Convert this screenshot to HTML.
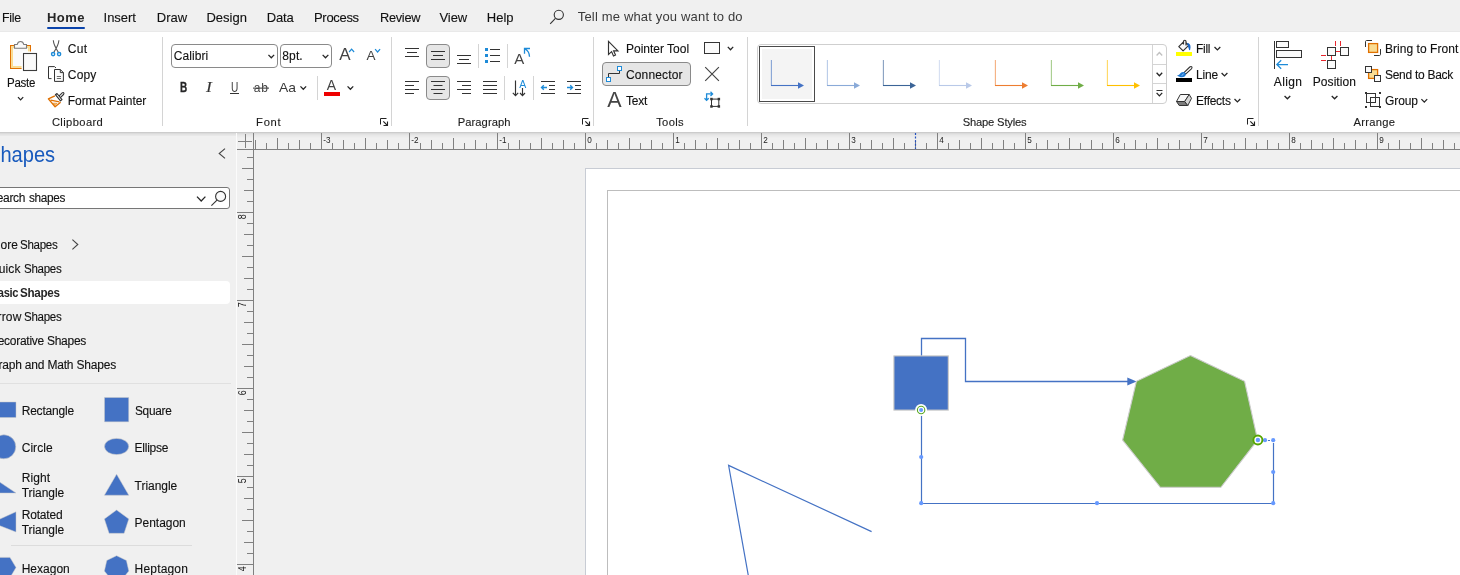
<!DOCTYPE html>
<html lang="en"><head><meta charset="utf-8"><title>Visio</title>
<style>
html,body{margin:0;padding:0;background:#f0f0f0;}
body{width:1460px;height:575px;overflow:hidden;position:relative;font-family:"Liberation Sans",sans-serif;color:#111111;}
#app{position:absolute;left:0;top:0;width:1460px;height:575px;overflow:hidden;background:#f0f0f0;}
.t{position:absolute;-webkit-text-stroke:0.12px currentColor;white-space:nowrap;line-height:16px;height:16px;}
#txt{position:absolute;left:0;top:0;width:1460px;height:575px;will-change:transform;}
.b{position:absolute;box-sizing:border-box;}
svg.ov{position:absolute;left:0;top:0;will-change:transform;}
</style></head>
<body><div id="app">
<div class="b tabbar" style="left:0px;top:0px;width:1460px;height:32px;background:#f0f0f0;"></div>
<div class="b ribbon" style="left:0px;top:32px;width:1460px;height:100px;background:#fff;"></div>
<div class="b shadow" style="left:0px;top:132px;width:1460px;height:6px;background:linear-gradient(#ccc 0,#ccc 1px,#dbdbdb 1px,#dbdbdb 2px,#e3e3e3 2px,#e3e3e3 3px,#e8e8e8 3px,#e8e8e8 4px,#ebebeb 4px,#ebebeb 5px,#eee 5px,#eee 6px);"></div>
<div class="b tabsel" style="left:47px;top:27px;width:38px;height:2px;background:#0a43ab;border-radius:1px;"></div>
<div class="b" style="left:0px;top:31px;width:1460px;height:1px;background:#e9e9e9;"></div>
<div class="b" style="left:162px;top:37px;width:1px;height:89px;background:#d4d4d4;"></div>
<div class="b" style="left:391px;top:37px;width:1px;height:89px;background:#d4d4d4;"></div>
<div class="b" style="left:593px;top:37px;width:1px;height:89px;background:#d4d4d4;"></div>
<div class="b" style="left:747px;top:37px;width:1px;height:89px;background:#d4d4d4;"></div>
<div class="b" style="left:1258px;top:37px;width:1px;height:89px;background:#d4d4d4;"></div>
<div class="b" style="left:171px;top:44px;width:107px;height:24px;border:1px solid #8a8a8a;border-radius:4px;background:#fff;"></div>
<div class="b" style="left:280px;top:44px;width:52px;height:24px;border:1px solid #8a8a8a;border-radius:4px;background:#fff;"></div>
<div class="b" style="left:317px;top:76px;width:1px;height:24px;background:#d4d4d4;"></div>
<div class="b" style="left:426px;top:44px;width:24px;height:24px;background:#e6e6e6;border:1px solid #8a8a8a;border-radius:4px;"></div>
<div class="b" style="left:426px;top:76px;width:24px;height:24px;background:#e6e6e6;border:1px solid #8a8a8a;border-radius:4px;"></div>
<div class="b" style="left:478px;top:44px;width:1px;height:24px;background:#d4d4d4;"></div>
<div class="b" style="left:507px;top:44px;width:1px;height:24px;background:#d4d4d4;"></div>
<div class="b" style="left:504px;top:76px;width:1px;height:24px;background:#d4d4d4;"></div>
<div class="b" style="left:533px;top:76px;width:1px;height:24px;background:#d4d4d4;"></div>
<div class="b" style="left:602px;top:62px;width:89px;height:24px;background:#e6e6e6;border:1px solid #8a8a8a;border-radius:4px;"></div>
<div class="b gallery" style="left:757px;top:44px;width:410px;height:60px;border:1px solid #cfcfcf;border-radius:4px;background:#fff;"></div>
<div class="b gsel" style="left:759px;top:46px;width:56px;height:56px;border:1px solid #4a4a4a;background:#fff;"></div>
<div class="b" style="left:762px;top:49px;width:50px;height:50px;background:#f4f4f4;"></div>
<div class="b" style="left:1152px;top:45px;width:1px;height:58px;background:#d4d4d4;"></div>
<div class="b" style="left:1153px;top:64px;width:13px;height:1px;background:#d4d4d4;"></div>
<div class="b" style="left:1153px;top:83px;width:13px;height:1px;background:#d4d4d4;"></div>
<div class="b panel" style="left:0px;top:136px;width:236px;height:439px;background:#f0f0f0;"></div>
<div class="b" style="left:236px;top:133px;width:1px;height:442px;background:#fbfbfb;"></div>
<div class="b search" style="left:-12px;top:187px;width:242px;height:22px;border:1px solid #767676;border-radius:3px;background:#fff;"></div>
<div class="b sel" style="left:-12px;top:281px;width:242px;height:23px;background:#fff;border-radius:4px;"></div>
<div class="b" style="left:0px;top:383px;width:231px;height:1px;background:#e0e0e0;"></div>
<div class="b" style="left:11px;top:545px;width:181px;height:1px;background:#dcdcdc;"></div>
<div class="b page" style="left:585px;top:168px;width:875px;height:407px;background:#fff;border-left:1px solid #c8ccd4;border-top:1px solid #c8ccd4;box-sizing:border-box;"></div>
<div class="b margin" style="left:607px;top:190px;width:853px;height:385px;border-left:1px solid #bdbdbd;border-top:1px solid #bdbdbd;box-sizing:border-box;"></div>
<svg class="ov" width="1460" height="575" viewBox="0 0 1460 575">
<circle cx="558.8" cy="14.8" r="4.6" fill="none" stroke="#333333" stroke-width="1.1"/>
<path d="M555.4 18.3L550.2 23.8" stroke="#333333" stroke-width="1.1" fill="none"/>
<rect x="10.6" y="45.6" width="19.8" height="22.8" fill="#fafafa" stroke="#e07000" stroke-width="1.2"/>
<rect x="12.1" y="47.1" width="16.8" height="19.8" fill="none" stroke="#fbdc8e" stroke-width="1.8"/>
<path d="M14.5 48.2V44.5H17.2C17.6 42.6 18.9 41.5 20.5 41.5C22.1 41.5 23.4 42.6 23.8 44.5H26.5V48.2Z" fill="#fafafa" stroke="#7a7a7a" stroke-width="1.1"/>
<rect x="21.6" y="51.5" width="17" height="20.5" fill="#fff"/>
<rect x="23.5" y="53.5" width="13" height="17" fill="#fafafa" stroke="#3c3c3c" stroke-width="1.1"/>
<path d="M18.00 97.15L20.60 99.85L23.20 97.15" fill="none" stroke="#262626" stroke-width="1.3"/>
<path d="M53.3 40.3C53.5 44 54.9 47 58.5 52.5M58.9 40.3C58.7 44 57.3 47 53.7 52.5" fill="none" stroke="#555" stroke-width="1.1"/>
<circle cx="53.1" cy="54.1" r="1.6" fill="#fff" stroke="#1e8bd8" stroke-width="1.4"/>
<circle cx="59.1" cy="54.1" r="1.6" fill="#fff" stroke="#1e8bd8" stroke-width="1.4"/>
<path d="M54.5 66.6H48.5V78.6H51.5" fill="none" stroke="#333333" stroke-width="1"/>
<path d="M54.5 66.6L56 68" fill="none" stroke="#333333" stroke-width="1"/>
<path d="M54.5 69.5H60.3L63.4 72.6V81.4H54.5Z" fill="#fafafa" stroke="#333333" stroke-width="1"/>
<path d="M60.3 69.5V72.6H63.4" fill="none" stroke="#333333" stroke-width="1"/>
<path d="M56.8 76.5H61M56.8 78.5H61" fill="none" stroke="#6a6a6a" stroke-width="1"/>
<path d="M54.9 95.8L48.4 98.9L55.1 106.7L60.6 102.2" fill="#fff" stroke="#e07000" stroke-width="1.4" stroke-linejoin="round"/>
<path d="M50.6 100.1L59.4 101.9" fill="none" stroke="#e07000" stroke-width="1.3"/>
<path d="M53.3 103.1L57 103.3L55.1 105.4Z" fill="#fbd98a" stroke="#e07000" stroke-width="0.6"/>
<path d="M58.4 96.6L62.2 92.8C62.8 92.3 63.5 92.4 63.8 93C64.1 93.6 63.9 94.1 63.5 94.5L59.9 98.2" fill="#fff" stroke="#333333" stroke-width="1.1" stroke-linejoin="round"/>
<path d="M55.4 94.7L57 93.5L62 99.6L60.5 100.9Z" fill="#fff" stroke="#333333" stroke-width="1.15" stroke-linejoin="round"/>
<path d="M268.45 54.88L271.30 57.72L274.15 54.88" fill="none" stroke="#262626" stroke-width="1.3"/>
<path d="M322.65 54.88L325.50 57.72L328.35 54.88" fill="none" stroke="#262626" stroke-width="1.3"/>
<path d="M349.10 52.00L351.60 49.20L354.10 52.00" fill="none" stroke="#1e8bd8" stroke-width="1.2"/>
<path d="M375.10 49.20L377.60 52.00L380.10 49.20" fill="none" stroke="#1e8bd8" stroke-width="1.2"/>
<rect x="230" y="93" width="9" height="1" fill="#333333"/>
<rect x="253" y="87.6" width="16" height="1" fill="#333333"/>
<path d="M300.45 86.38L303.30 89.22L306.15 86.38" fill="none" stroke="#262626" stroke-width="1.3"/>
<rect x="324" y="92" width="16" height="4" fill="#ee0000"/>
<path d="M347.55 86.38L350.40 89.22L353.25 86.38" fill="none" stroke="#262626" stroke-width="1.3"/>
<path d="M380.5 124.5V118.5H386.5" fill="none" stroke="#222" stroke-width="1"/>
<path d="M383.3 121.3L387.5 125.5M387.5 121.5V125.5H383.5" fill="none" stroke="#222" stroke-width="1.1"/>
<rect x="405" y="48" width="14" height="1" fill="#333333"/>
<rect x="407.0" y="52" width="10.0" height="1" fill="#333333"/>
<rect x="405" y="56" width="14" height="1" fill="#333333"/>
<rect x="431" y="51" width="14" height="1" fill="#333333"/>
<rect x="433.0" y="55" width="10.0" height="1" fill="#333333"/>
<rect x="431" y="59" width="14" height="1" fill="#333333"/>
<rect x="457" y="55" width="14" height="1" fill="#333333"/>
<rect x="459.0" y="59" width="10.0" height="1" fill="#333333"/>
<rect x="457" y="63" width="14" height="1" fill="#333333"/>
<rect x="485" y="48" width="3" height="3" fill="#1e8bd8"/>
<rect x="490" y="49" width="10" height="1" fill="#333333"/>
<rect x="485" y="54" width="3" height="3" fill="#1e8bd8"/>
<rect x="490" y="55" width="10" height="1" fill="#333333"/>
<rect x="485" y="60" width="3" height="3" fill="#1e8bd8"/>
<rect x="490" y="61" width="10" height="1" fill="#333333"/>
<path d="M529.5 56.7C529.5 53 527.8 50.4 524.8 48.7M524.5 53.8V48.5H530" fill="none" stroke="#1e8bd8" stroke-width="1.3"/>
<rect x="405" y="81" width="14" height="1" fill="#333333"/>
<rect x="405" y="85" width="9" height="1" fill="#333333"/>
<rect x="405" y="89" width="14" height="1" fill="#333333"/>
<rect x="405" y="93" width="9" height="1" fill="#333333"/>
<rect x="431" y="81" width="14" height="1" fill="#333333"/>
<rect x="433.5" y="85" width="9.0" height="1" fill="#333333"/>
<rect x="431" y="89" width="14" height="1" fill="#333333"/>
<rect x="433.5" y="93" width="9.0" height="1" fill="#333333"/>
<rect x="457" y="81" width="14" height="1" fill="#333333"/>
<rect x="462" y="85" width="9" height="1" fill="#333333"/>
<rect x="457" y="89" width="14" height="1" fill="#333333"/>
<rect x="462" y="93" width="9" height="1" fill="#333333"/>
<rect x="483" y="81" width="14" height="1" fill="#333333"/>
<rect x="483" y="85" width="14" height="1" fill="#333333"/>
<rect x="483" y="89" width="14" height="1" fill="#333333"/>
<rect x="483" y="93" width="14" height="1" fill="#333333"/>
<path d="M515.5 80.5V95.5M512.8 92.8L515.5 95.6L518.2 92.8" fill="none" stroke="#333333" stroke-width="1.15"/>
<path d="M522.5 88V95.5M520 93L522.5 95.6L525 93" fill="none" stroke="#333333" stroke-width="1.15"/>
<rect x="541" y="81" width="14" height="1" fill="#333333"/>
<rect x="549" y="85" width="6" height="1" fill="#333333"/>
<rect x="549" y="89" width="6" height="1" fill="#333333"/>
<rect x="541" y="93" width="14" height="1" fill="#333333"/>
<path d="M541.5 87.5H547M543.8 85.2L541.5 87.5L543.8 89.8" fill="none" stroke="#1e8bd8" stroke-width="1.35"/>
<rect x="567" y="81" width="14" height="1" fill="#333333"/>
<rect x="575" y="85" width="6" height="1" fill="#333333"/>
<rect x="575" y="89" width="6" height="1" fill="#333333"/>
<rect x="567" y="93" width="14" height="1" fill="#333333"/>
<path d="M567 87.5H572.5M570.2 85.2L572.5 87.5L570.2 89.8" fill="none" stroke="#1e8bd8" stroke-width="1.35"/>
<path d="M582.5 124.5V118.5H588.5" fill="none" stroke="#222" stroke-width="1"/>
<path d="M585.3 121.3L589.5 125.5M589.5 121.5V125.5H585.5" fill="none" stroke="#222" stroke-width="1.1"/>
<path d="M608.5 41.4V54.4L611.6 51.6L613.5 55.9L615.5 55L613.6 50.8H617.9Z" fill="#fff" stroke="#333333" stroke-width="1.15" stroke-linejoin="miter"/>
<rect x="704.5" y="42.5" width="15" height="11" fill="#fafafa" stroke="#333333" stroke-width="1"/>
<path d="M727.80 46.90L730.50 49.70L733.20 46.90" fill="none" stroke="#262626" stroke-width="1.3"/>
<path d="M608.5 78V73.5H619.5V69" fill="none" stroke="#333333" stroke-width="1"/>
<rect x="606.5" y="77.5" width="4" height="4" fill="#fff" stroke="#1e8bd8" stroke-width="1"/>
<rect x="617.5" y="66.5" width="4" height="4" fill="#fff" stroke="#1e8bd8" stroke-width="1"/>
<path d="M705.2 67.1L718.9 80.8M718.9 67.1L705.2 80.8" fill="none" stroke="#444" stroke-width="1.15"/>
<rect x="711.5" y="99.1" width="7.3" height="7.3" fill="none" stroke="#333333" stroke-width="1"/>
<rect x="710.2" y="97.8" width="2.5" height="2.5" fill="#333333"/>
<rect x="717.6" y="97.8" width="2.5" height="2.5" fill="#333333"/>
<rect x="710.2" y="105.2" width="2.5" height="2.5" fill="#333333"/>
<rect x="717.6" y="105.2" width="2.5" height="2.5" fill="#333333"/>
<path d="M706.6 100.2V93.9H712.4M710.5 91.8L712.6 93.9L710.5 96M704.5 98.2L706.6 100.4L708.7 98.2" fill="none" stroke="#1e8bd8" stroke-width="1.3"/>
<path d="M771.4 60V85.5" fill="none" stroke="#4472c4" stroke-width="1.1" stroke-opacity="0.62"/>
<path d="M771 85.5H798.5" fill="none" stroke="#4472c4" stroke-width="1.1"/>
<path d="M798 82.3L804 85.5L798 88.7Z" fill="#4472c4"/>
<path d="M827.4 60V85.5" fill="none" stroke="#8aaad8" stroke-width="1.1" stroke-opacity="0.62"/>
<path d="M827 85.5H854.5" fill="none" stroke="#8aaad8" stroke-width="1.1"/>
<path d="M854 82.3L860 85.5L854 88.7Z" fill="#8aaad8"/>
<path d="M883.4 60V85.5" fill="none" stroke="#3b6497" stroke-width="1.1" stroke-opacity="0.62"/>
<path d="M883 85.5H910.5" fill="none" stroke="#3b6497" stroke-width="1.1"/>
<path d="M910 82.3L916 85.5L910 88.7Z" fill="#3b6497"/>
<path d="M939.4 60V85.5" fill="none" stroke="#b9c9e8" stroke-width="1.1" stroke-opacity="0.62"/>
<path d="M939 85.5H966.5" fill="none" stroke="#b9c9e8" stroke-width="1.1"/>
<path d="M966 82.3L972 85.5L966 88.7Z" fill="#b9c9e8"/>
<path d="M995.4 60V85.5" fill="none" stroke="#ed7d31" stroke-width="1.1" stroke-opacity="0.62"/>
<path d="M995 85.5H1022.5" fill="none" stroke="#ed7d31" stroke-width="1.1"/>
<path d="M1022 82.3L1028 85.5L1022 88.7Z" fill="#ed7d31"/>
<path d="M1051.4 60V85.5" fill="none" stroke="#70ad47" stroke-width="1.1" stroke-opacity="0.62"/>
<path d="M1051 85.5H1078.5" fill="none" stroke="#70ad47" stroke-width="1.1"/>
<path d="M1078 82.3L1084 85.5L1078 88.7Z" fill="#70ad47"/>
<path d="M1107.4 60V85.5" fill="none" stroke="#ffc000" stroke-width="1.1" stroke-opacity="0.62"/>
<path d="M1107 85.5H1134.5" fill="none" stroke="#ffc000" stroke-width="1.1"/>
<path d="M1134 82.3L1140 85.5L1134 88.7Z" fill="#ffc000"/>
<path d="M1156.60 55.50L1159.40 52.50L1162.20 55.50" fill="none" stroke="#c0c0c0" stroke-width="1.3"/>
<path d="M1156.60 72.80L1159.40 75.80L1162.20 72.80" fill="none" stroke="#262626" stroke-width="1.3"/>
<rect x="1156.5" y="90" width="6.0" height="1" fill="#333333"/>
<path d="M1156.60 92.90L1159.40 95.90L1162.20 92.90" fill="none" stroke="#262626" stroke-width="1.3"/>
<rect x="1176" y="52" width="16" height="4" fill="#ffff00"/>
<path d="M1183.5 41.8L1178.8 46.6L1183.1 50.9L1188.7 45.4L1186 42.6M1183.5 44.5V41.6C1183.5 39.8 1186 39.8 1186 41.6V45.6" fill="#fafafa" stroke="#333333" stroke-width="1.2" stroke-linejoin="round"/>
<path d="M1187.8 43.6C1189.8 44.4 1190.4 46.6 1189.6 49.6C1188.9 47.6 1188.6 46 1187.8 43.6Z" fill="#1464c8" stroke="#1464c8" stroke-width="1.1" stroke-linejoin="round"/>
<path d="M1214.50 47.05L1217.40 49.95L1220.30 47.05" fill="none" stroke="#262626" stroke-width="1.3"/>
<rect x="1176" y="78" width="16" height="4" fill="#000"/>
<path d="M1184 72.6L1189.8 67C1190.6 66.3 1191.4 66.3 1191.8 66.8C1192.2 67.3 1192.1 68 1191.4 68.8L1185.6 74.2Z" fill="#fff" stroke="#333333" stroke-width="1.1" stroke-linejoin="round"/>
<path d="M1177 75.4C1179.6 75.2 1180 73.6 1181.2 72.6C1182.4 71.6 1184.4 71.8 1185.4 73C1186.3 74.2 1185.8 76 1184.2 76.7C1182.2 77.6 1179.4 77.2 1177 75.4Z" fill="#1e78d2"/>
<path d="M1181.6 75.4C1182.6 75 1183.6 74.4 1183.9 73.4" fill="none" stroke="#8fc2f0" stroke-width="1"/>
<path d="M1221.60 73.05L1224.50 75.95L1227.40 73.05" fill="none" stroke="#262626" stroke-width="1.3"/>
<path d="M1180.3 94.5H1189.2L1184.7 101.5H1176.5Z" fill="#f7f7f7" stroke="#333333" stroke-width="1" stroke-linejoin="round"/>
<path d="M1176.5 101.5H1184.7L1187.8 105.5H1179.2Z" fill="#7d7d7d" stroke="#333333" stroke-width="1" stroke-linejoin="round"/>
<path d="M1189.2 94.5L1191.5 98.3L1187.8 105.5L1184.7 101.5Z" fill="#d6d6d6" stroke="#333333" stroke-width="1" stroke-linejoin="round"/>
<path d="M1234.50 99.05L1237.40 101.95L1240.30 99.05" fill="none" stroke="#262626" stroke-width="1.3"/>
<path d="M1247.5 124.5V118.5H1253.5" fill="none" stroke="#222" stroke-width="1"/>
<path d="M1250.3 121.3L1254.5 125.5M1254.5 121.5V125.5H1250.5" fill="none" stroke="#222" stroke-width="1.1"/>
<rect x="1274" y="41" width="1" height="28" fill="#333333"/>
<rect x="1276.5" y="41.5" width="12" height="6" fill="#fafafa" stroke="#333333" stroke-width="1"/>
<rect x="1276.5" y="50.5" width="25" height="7" fill="#fafafa" stroke="#333333" stroke-width="1"/>
<path d="M1276.8 64.5H1288M1281.2 60.2L1276.8 64.5L1281.2 68.8" fill="none" stroke="#1e8bd8" stroke-width="1.25"/>
<path d="M1284.55 95.98L1287.40 98.83L1290.25 95.98" fill="none" stroke="#262626" stroke-width="1.3"/>
<path d="M1336 51.5H1340M1331.5 56V60M1335.5 41V46M1340.5 41V46M1321 55.5H1326M1321 60.5H1326" fill="none" stroke="#e8262d" stroke-width="1"/>
<rect x="1327.5" y="47.5" width="8" height="8" fill="#fafafa" stroke="#333333" stroke-width="1"/>
<rect x="1340.5" y="47.5" width="8" height="8" fill="#fafafa" stroke="#333333" stroke-width="1"/>
<rect x="1327.5" y="60.5" width="8" height="8" fill="#fafafa" stroke="#333333" stroke-width="1"/>
<path d="M1331.75 95.98L1334.60 98.83L1337.45 95.98" fill="none" stroke="#262626" stroke-width="1.3"/>
<path d="M1365.5 47V41.5C1365.5 41 1366 40.5 1366.5 40.5H1372M1380.5 49V54.5C1380.5 55 1380 55.5 1379.5 55.5H1374" fill="none" stroke="#333333" stroke-width="1"/>
<rect x="1368.6" y="43.6" width="9" height="8.8" fill="#f9dc93" stroke="#e07000" stroke-width="1.3"/>
<rect x="1368.6" y="69.6" width="9" height="8.8" fill="#f9dc93" stroke="#e07000" stroke-width="1.3"/>
<rect x="1365.5" y="66.5" width="6" height="6" fill="#fafafa" stroke="#333333" stroke-width="1"/>
<rect x="1374.5" y="75.5" width="6" height="6" fill="#fafafa" stroke="#333333" stroke-width="1"/>
<rect x="1366.5" y="93.5" width="9" height="9" fill="none" stroke="#333333" stroke-width="1"/>
<rect x="1370.5" y="97.5" width="9" height="9" fill="none" stroke="#333333" stroke-width="1"/>
<rect x="1365" y="92" width="2" height="2" fill="#333333"/>
<rect x="1379" y="92" width="2" height="2" fill="#333333"/>
<rect x="1365" y="106" width="2" height="2" fill="#333333"/>
<rect x="1379" y="106" width="2" height="2" fill="#333333"/>
<path d="M1421.40 99.10L1424.30 102.10L1427.20 99.10" fill="none" stroke="#262626" stroke-width="1.3"/>
<path d="M225 148.6L219.2 153.5L225 158.4" fill="none" stroke="#444" stroke-width="1.1"/>
<path d="M197 196.6L201.2 201L205.4 196.6" fill="none" stroke="#262626" stroke-width="1.3"/>
<circle cx="220.6" cy="196.4" r="5" fill="#fafafa" stroke="#333333" stroke-width="1.1"/>
<path d="M217 200.2L211.4 205.6" fill="none" stroke="#333333" stroke-width="1.1"/>
<path d="M72.4 239.6L77.8 244.5L72.4 249.4" fill="none" stroke="#444" stroke-width="1.1"/>
<path d="M-8 402H16V417.5H-8Z" fill="#4472c4" stroke="#c9c9c9" stroke-width="0.6" stroke-opacity="0.8"/>
<path d="M104.5 397.5H128.7V421.8H104.5Z" fill="#4472c4" stroke="#c9c9c9" stroke-width="0.6" stroke-opacity="0.8"/>
<circle cx="3.8" cy="446.8" r="12" fill="#4472c4" stroke="#c9c9c9" stroke-width="0.6"/>
<ellipse cx="116.6" cy="446.5" rx="12.1" ry="8.1" fill="#4472c4" stroke="#c9c9c9" stroke-width="0.6"/>
<path d="M-8 477V493H16Z" fill="#4472c4" stroke="#c9c9c9" stroke-width="0.6" stroke-opacity="0.8"/>
<path d="M116.6 474.2L128.8 495.2H104.4Z" fill="#4472c4" stroke="#c9c9c9" stroke-width="0.6" stroke-opacity="0.8"/>
<path d="M16 511.8V532L-8 522.7Z" fill="#4472c4" stroke="#c9c9c9" stroke-width="0.6" stroke-opacity="0.8"/>
<path d="M116.6 510L128.8 518.9L124.1 533.3H109.1L104.4 518.9Z" fill="#4472c4" stroke="#c9c9c9" stroke-width="0.6" stroke-opacity="0.8"/>
<path d="M-8 567.5L-2 557.4H10L16 567.5L10 577.6H-2Z" fill="#4472c4" stroke="#c9c9c9" stroke-width="0.6" stroke-opacity="0.8"/>
<path d="M116.6 555.7L126.4 560.4L128.8 571.0L122.0 579.5L111.2 579.5L104.4 571.0L106.8 560.4Z" fill="#4472c4" stroke="#c9c9c9" stroke-width="0.6" stroke-opacity="0.8"/>
<rect x="237" y="149" width="1223" height="1" fill="#808080"/>
<rect x="253" y="133" width="1" height="442" fill="#808080"/>
<rect x="238" y="141" width="14" height="1" fill="#808080"/>
<rect x="245" y="134" width="1" height="14" fill="#808080"/>
<rect x="255" y="140" width="1" height="9" fill="#808080"/>
<rect x="266" y="143" width="1" height="6" fill="#808080"/>
<rect x="277" y="138" width="1" height="11" fill="#808080"/>
<rect x="288" y="143" width="1" height="6" fill="#808080"/>
<rect x="299" y="140" width="1" height="9" fill="#808080"/>
<rect x="310" y="143" width="1" height="6" fill="#808080"/>
<rect x="321" y="133" width="1" height="16" fill="#808080"/>
<rect x="332" y="143" width="1" height="6" fill="#808080"/>
<rect x="343" y="140" width="1" height="9" fill="#808080"/>
<rect x="354" y="143" width="1" height="6" fill="#808080"/>
<rect x="365" y="138" width="1" height="11" fill="#808080"/>
<rect x="376" y="143" width="1" height="6" fill="#808080"/>
<rect x="387" y="140" width="1" height="9" fill="#808080"/>
<rect x="398" y="143" width="1" height="6" fill="#808080"/>
<rect x="409" y="133" width="1" height="16" fill="#808080"/>
<rect x="420" y="143" width="1" height="6" fill="#808080"/>
<rect x="431" y="140" width="1" height="9" fill="#808080"/>
<rect x="442" y="143" width="1" height="6" fill="#808080"/>
<rect x="453" y="138" width="1" height="11" fill="#808080"/>
<rect x="464" y="143" width="1" height="6" fill="#808080"/>
<rect x="475" y="140" width="1" height="9" fill="#808080"/>
<rect x="486" y="143" width="1" height="6" fill="#808080"/>
<rect x="497" y="133" width="1" height="16" fill="#808080"/>
<rect x="508" y="143" width="1" height="6" fill="#808080"/>
<rect x="519" y="140" width="1" height="9" fill="#808080"/>
<rect x="530" y="143" width="1" height="6" fill="#808080"/>
<rect x="541" y="138" width="1" height="11" fill="#808080"/>
<rect x="552" y="143" width="1" height="6" fill="#808080"/>
<rect x="563" y="140" width="1" height="9" fill="#808080"/>
<rect x="574" y="143" width="1" height="6" fill="#808080"/>
<rect x="585" y="133" width="1" height="16" fill="#808080"/>
<rect x="596" y="143" width="1" height="6" fill="#808080"/>
<rect x="607" y="140" width="1" height="9" fill="#808080"/>
<rect x="618" y="143" width="1" height="6" fill="#808080"/>
<rect x="629" y="138" width="1" height="11" fill="#808080"/>
<rect x="640" y="143" width="1" height="6" fill="#808080"/>
<rect x="651" y="140" width="1" height="9" fill="#808080"/>
<rect x="662" y="143" width="1" height="6" fill="#808080"/>
<rect x="673" y="133" width="1" height="16" fill="#808080"/>
<rect x="684" y="143" width="1" height="6" fill="#808080"/>
<rect x="695" y="140" width="1" height="9" fill="#808080"/>
<rect x="706" y="143" width="1" height="6" fill="#808080"/>
<rect x="717" y="138" width="1" height="11" fill="#808080"/>
<rect x="728" y="143" width="1" height="6" fill="#808080"/>
<rect x="739" y="140" width="1" height="9" fill="#808080"/>
<rect x="750" y="143" width="1" height="6" fill="#808080"/>
<rect x="761" y="133" width="1" height="16" fill="#808080"/>
<rect x="772" y="143" width="1" height="6" fill="#808080"/>
<rect x="783" y="140" width="1" height="9" fill="#808080"/>
<rect x="794" y="143" width="1" height="6" fill="#808080"/>
<rect x="805" y="138" width="1" height="11" fill="#808080"/>
<rect x="816" y="143" width="1" height="6" fill="#808080"/>
<rect x="827" y="140" width="1" height="9" fill="#808080"/>
<rect x="838" y="143" width="1" height="6" fill="#808080"/>
<rect x="849" y="133" width="1" height="16" fill="#808080"/>
<rect x="860" y="143" width="1" height="6" fill="#808080"/>
<rect x="871" y="140" width="1" height="9" fill="#808080"/>
<rect x="882" y="143" width="1" height="6" fill="#808080"/>
<rect x="893" y="138" width="1" height="11" fill="#808080"/>
<rect x="904" y="143" width="1" height="6" fill="#808080"/>
<rect x="915" y="140" width="1" height="9" fill="#808080"/>
<rect x="926" y="143" width="1" height="6" fill="#808080"/>
<rect x="937" y="133" width="1" height="16" fill="#808080"/>
<rect x="948" y="143" width="1" height="6" fill="#808080"/>
<rect x="959" y="140" width="1" height="9" fill="#808080"/>
<rect x="970" y="143" width="1" height="6" fill="#808080"/>
<rect x="981" y="138" width="1" height="11" fill="#808080"/>
<rect x="992" y="143" width="1" height="6" fill="#808080"/>
<rect x="1003" y="140" width="1" height="9" fill="#808080"/>
<rect x="1014" y="143" width="1" height="6" fill="#808080"/>
<rect x="1025" y="133" width="1" height="16" fill="#808080"/>
<rect x="1036" y="143" width="1" height="6" fill="#808080"/>
<rect x="1047" y="140" width="1" height="9" fill="#808080"/>
<rect x="1058" y="143" width="1" height="6" fill="#808080"/>
<rect x="1069" y="138" width="1" height="11" fill="#808080"/>
<rect x="1080" y="143" width="1" height="6" fill="#808080"/>
<rect x="1091" y="140" width="1" height="9" fill="#808080"/>
<rect x="1102" y="143" width="1" height="6" fill="#808080"/>
<rect x="1113" y="133" width="1" height="16" fill="#808080"/>
<rect x="1124" y="143" width="1" height="6" fill="#808080"/>
<rect x="1135" y="140" width="1" height="9" fill="#808080"/>
<rect x="1146" y="143" width="1" height="6" fill="#808080"/>
<rect x="1157" y="138" width="1" height="11" fill="#808080"/>
<rect x="1168" y="143" width="1" height="6" fill="#808080"/>
<rect x="1179" y="140" width="1" height="9" fill="#808080"/>
<rect x="1190" y="143" width="1" height="6" fill="#808080"/>
<rect x="1201" y="133" width="1" height="16" fill="#808080"/>
<rect x="1212" y="143" width="1" height="6" fill="#808080"/>
<rect x="1223" y="140" width="1" height="9" fill="#808080"/>
<rect x="1234" y="143" width="1" height="6" fill="#808080"/>
<rect x="1245" y="138" width="1" height="11" fill="#808080"/>
<rect x="1256" y="143" width="1" height="6" fill="#808080"/>
<rect x="1267" y="140" width="1" height="9" fill="#808080"/>
<rect x="1278" y="143" width="1" height="6" fill="#808080"/>
<rect x="1289" y="133" width="1" height="16" fill="#808080"/>
<rect x="1300" y="143" width="1" height="6" fill="#808080"/>
<rect x="1311" y="140" width="1" height="9" fill="#808080"/>
<rect x="1322" y="143" width="1" height="6" fill="#808080"/>
<rect x="1333" y="138" width="1" height="11" fill="#808080"/>
<rect x="1344" y="143" width="1" height="6" fill="#808080"/>
<rect x="1355" y="140" width="1" height="9" fill="#808080"/>
<rect x="1366" y="143" width="1" height="6" fill="#808080"/>
<rect x="1377" y="133" width="1" height="16" fill="#808080"/>
<rect x="1388" y="143" width="1" height="6" fill="#808080"/>
<rect x="1399" y="140" width="1" height="9" fill="#808080"/>
<rect x="1410" y="143" width="1" height="6" fill="#808080"/>
<rect x="1421" y="138" width="1" height="11" fill="#808080"/>
<rect x="1432" y="143" width="1" height="6" fill="#808080"/>
<rect x="1443" y="140" width="1" height="9" fill="#808080"/>
<rect x="1454" y="143" width="1" height="6" fill="#808080"/>
<text transform="translate(323.3 143) scale(0.86 1)" font-family="'Liberation Sans',sans-serif" font-size="9.5" fill="#1a1a1a">-3</text>
<text transform="translate(411.3 143) scale(0.86 1)" font-family="'Liberation Sans',sans-serif" font-size="9.5" fill="#1a1a1a">-2</text>
<text transform="translate(499.3 143) scale(0.86 1)" font-family="'Liberation Sans',sans-serif" font-size="9.5" fill="#1a1a1a">-1</text>
<text transform="translate(587.3 143) scale(0.86 1)" font-family="'Liberation Sans',sans-serif" font-size="9.5" fill="#1a1a1a">0</text>
<text transform="translate(675.3 143) scale(0.86 1)" font-family="'Liberation Sans',sans-serif" font-size="9.5" fill="#1a1a1a">1</text>
<text transform="translate(763.3 143) scale(0.86 1)" font-family="'Liberation Sans',sans-serif" font-size="9.5" fill="#1a1a1a">2</text>
<text transform="translate(851.3 143) scale(0.86 1)" font-family="'Liberation Sans',sans-serif" font-size="9.5" fill="#1a1a1a">3</text>
<text transform="translate(939.3 143) scale(0.86 1)" font-family="'Liberation Sans',sans-serif" font-size="9.5" fill="#1a1a1a">4</text>
<text transform="translate(1027.3 143) scale(0.86 1)" font-family="'Liberation Sans',sans-serif" font-size="9.5" fill="#1a1a1a">5</text>
<text transform="translate(1115.3 143) scale(0.86 1)" font-family="'Liberation Sans',sans-serif" font-size="9.5" fill="#1a1a1a">6</text>
<text transform="translate(1203.3 143) scale(0.86 1)" font-family="'Liberation Sans',sans-serif" font-size="9.5" fill="#1a1a1a">7</text>
<text transform="translate(1291.3 143) scale(0.86 1)" font-family="'Liberation Sans',sans-serif" font-size="9.5" fill="#1a1a1a">8</text>
<text transform="translate(1379.3 143) scale(0.86 1)" font-family="'Liberation Sans',sans-serif" font-size="9.5" fill="#1a1a1a">9</text>
<rect x="247" y="157" width="6" height="1" fill="#808080"/>
<rect x="242" y="168" width="11" height="1" fill="#808080"/>
<rect x="247" y="179" width="6" height="1" fill="#808080"/>
<rect x="244" y="190" width="9" height="1" fill="#808080"/>
<rect x="247" y="201" width="6" height="1" fill="#808080"/>
<rect x="237" y="212" width="16" height="1" fill="#808080"/>
<rect x="247" y="223" width="6" height="1" fill="#808080"/>
<rect x="244" y="234" width="9" height="1" fill="#808080"/>
<rect x="247" y="245" width="6" height="1" fill="#808080"/>
<rect x="242" y="256" width="11" height="1" fill="#808080"/>
<rect x="247" y="267" width="6" height="1" fill="#808080"/>
<rect x="244" y="278" width="9" height="1" fill="#808080"/>
<rect x="247" y="289" width="6" height="1" fill="#808080"/>
<rect x="237" y="300" width="16" height="1" fill="#808080"/>
<rect x="247" y="311" width="6" height="1" fill="#808080"/>
<rect x="244" y="322" width="9" height="1" fill="#808080"/>
<rect x="247" y="333" width="6" height="1" fill="#808080"/>
<rect x="242" y="344" width="11" height="1" fill="#808080"/>
<rect x="247" y="355" width="6" height="1" fill="#808080"/>
<rect x="244" y="366" width="9" height="1" fill="#808080"/>
<rect x="247" y="377" width="6" height="1" fill="#808080"/>
<rect x="237" y="388" width="16" height="1" fill="#808080"/>
<rect x="247" y="399" width="6" height="1" fill="#808080"/>
<rect x="244" y="410" width="9" height="1" fill="#808080"/>
<rect x="247" y="421" width="6" height="1" fill="#808080"/>
<rect x="242" y="432" width="11" height="1" fill="#808080"/>
<rect x="247" y="443" width="6" height="1" fill="#808080"/>
<rect x="244" y="454" width="9" height="1" fill="#808080"/>
<rect x="247" y="465" width="6" height="1" fill="#808080"/>
<rect x="237" y="476" width="16" height="1" fill="#808080"/>
<rect x="247" y="487" width="6" height="1" fill="#808080"/>
<rect x="244" y="498" width="9" height="1" fill="#808080"/>
<rect x="247" y="509" width="6" height="1" fill="#808080"/>
<rect x="242" y="520" width="11" height="1" fill="#808080"/>
<rect x="247" y="531" width="6" height="1" fill="#808080"/>
<rect x="244" y="542" width="9" height="1" fill="#808080"/>
<rect x="247" y="553" width="6" height="1" fill="#808080"/>
<rect x="237" y="564" width="16" height="1" fill="#808080"/>
<text transform="translate(246.2 219.3) rotate(-90) scale(0.88 1)" font-family="'Liberation Sans',sans-serif" font-size="10.2" fill="#1a1a1a">8</text>
<text transform="translate(246.2 307.3) rotate(-90) scale(0.88 1)" font-family="'Liberation Sans',sans-serif" font-size="10.2" fill="#1a1a1a">7</text>
<text transform="translate(246.2 395.3) rotate(-90) scale(0.88 1)" font-family="'Liberation Sans',sans-serif" font-size="10.2" fill="#1a1a1a">6</text>
<text transform="translate(246.2 483.3) rotate(-90) scale(0.88 1)" font-family="'Liberation Sans',sans-serif" font-size="10.2" fill="#1a1a1a">5</text>
<text transform="translate(246.2 571.3) rotate(-90) scale(0.88 1)" font-family="'Liberation Sans',sans-serif" font-size="10.2" fill="#1a1a1a">4</text>
<path d="M915.5 133V149" stroke="#2450c0" stroke-width="1.2" stroke-dasharray="2 1.6" fill="none"/>
<path d="M871.6 531.6L728.6 465.4L748.4 576" fill="none" stroke="#4472c4" stroke-width="1.2"/>
<path d="M921.5 356V338.5H965.5V381.5H1128" fill="none" stroke="#4472c4" stroke-width="1.3"/>
<path d="M1127.3 377.6L1136.6 381.5L1127.3 385.4Z" fill="#4472c4"/>
<rect x="893.9" y="355.9" width="54.4" height="54.2" fill="#4472c4" stroke="#cdcbc8" stroke-width="1.1"/>
<path d="M1190.4 355.6L1244.6 381.3L1257.6 440L1220.9 487.3L1160.3 487.3L1122.6 440L1136.4 381.3Z" fill="#70ad47" stroke="#cccccc" stroke-width="1.1"/>
<path d="M921.5 415V503.5H1273.5V443" fill="none" stroke="#4472c4" stroke-width="1.2"/>
<path d="M1268 440.5H1270" fill="none" stroke="#4472c4" stroke-width="1"/>
<circle cx="921.2" cy="457" r="2.1" fill="#6699ff"/>
<circle cx="921.2" cy="503.2" r="2.1" fill="#6699ff"/>
<circle cx="1097" cy="503.2" r="2.1" fill="#6699ff"/>
<circle cx="1273.2" cy="503.2" r="2.1" fill="#6699ff"/>
<circle cx="1273.2" cy="472" r="2.1" fill="#6699ff"/>
<circle cx="1273.2" cy="440.2" r="2.1" fill="#6699ff"/>
<circle cx="1265" cy="440.2" r="2.1" fill="#6699ff"/>
<circle cx="921.1" cy="410" r="6" fill="#fff"/>
<circle cx="921.1" cy="410" r="3.7" fill="#fff" stroke="#5aa822" stroke-width="1.1"/>
<circle cx="921.1" cy="410" r="2" fill="#6699ff"/>
<circle cx="1257.9" cy="440" r="4.5" fill="#fff" stroke="#55a500" stroke-width="1.9"/>
<circle cx="1257.9" cy="440" r="2.2" fill="#6699ff"/>
</svg>
<div id="txt">
<span class="t" style="left:1.80px;top:10px;font-size:13px;letter-spacing:-0.300px;transform:scaleX(0.9530);transform-origin:0 0;">File</span>
<span class="t" style="left:46.90px;top:10px;font-size:13px;letter-spacing:0.462px;font-weight:bold;-webkit-text-stroke:0;color:#262626;">Home</span>
<span class="t" style="left:103.60px;top:10px;font-size:13px;letter-spacing:-0.043px;">Insert</span>
<span class="t" style="left:156.70px;top:10px;font-size:13px;letter-spacing:0.077px;">Draw</span>
<span class="t" style="left:206.40px;top:10px;font-size:13px;letter-spacing:0.006px;">Design</span>
<span class="t" style="left:266.70px;top:10px;font-size:13px;letter-spacing:-0.156px;">Data</span>
<span class="t" style="left:313.70px;top:10px;font-size:13px;letter-spacing:-0.300px;transform:scaleX(0.9988);transform-origin:0 0;">Process</span>
<span class="t" style="left:379.80px;top:10px;font-size:13px;letter-spacing:-0.300px;transform:scaleX(0.9838);transform-origin:0 0;">Review</span>
<span class="t" style="left:439.40px;top:10px;font-size:13px;letter-spacing:-0.025px;">View</span>
<span class="t" style="left:486.80px;top:10px;font-size:13px;letter-spacing:-0.014px;">Help</span>
<span class="t" style="left:577.80px;top:9px;font-size:13px;letter-spacing:0.165px;color:#3a3a3a;-webkit-text-stroke:0;">Tell me what you want to do</span>
<span class="t" style="left:7.10px;top:75px;font-size:12px;letter-spacing:-0.300px;transform:scaleX(0.9598);transform-origin:0 0;">Paste</span>
<span class="t" style="left:67.80px;top:41px;font-size:12px;letter-spacing:0.364px;">Cut</span>
<span class="t" style="left:67.80px;top:67px;font-size:12px;letter-spacing:0.164px;">Copy</span>
<span class="t" style="left:67.80px;top:93px;font-size:12px;letter-spacing:-0.066px;">Format Painter</span>
<span class="t" style="left:51.90px;top:114px;font-size:11.2px;letter-spacing:0.383px;color:#1c1c1c;">Clipboard</span>
<span class="t" style="left:173.80px;top:48px;font-size:12px;letter-spacing:0.065px;">Calibri</span>
<span class="t" style="left:282.30px;top:48px;font-size:12px;letter-spacing:0.128px;">8pt.</span>
<span class="t" style="left:339.20px;top:47px;font-size:17px;color:#444;-webkit-text-stroke:0;">A</span>
<span class="t" style="left:366.50px;top:48px;font-size:13.5px;color:#444;-webkit-text-stroke:0;">A</span>
<span class="t" style="left:179.90px;top:79px;font-size:14.6px;transform:scaleX(0.6830);transform-origin:0 0;font-weight:bold;-webkit-text-stroke:0;color:#262627;-webkit-text-stroke:0.35px #262627;">B</span>
<span class="t" style="left:205.87px;top:79px;font-size:15px;transform:scaleX(1.1671);transform-origin:0 0;font-style:italic;font-family:'Liberation Serif',serif;color:#333;">I</span>
<span class="t" style="left:230.80px;top:80px;font-size:13.8px;transform:scaleX(0.7327);transform-origin:0 0;color:#3a3a3a;-webkit-text-stroke:0;">U</span>
<span class="t" style="left:253.80px;top:80px;font-size:12px;letter-spacing:0.656px;color:#444;-webkit-text-stroke:0;">ab</span>
<span class="t" style="left:278.90px;top:80px;font-size:13px;transform:scaleX(1.0684);transform-origin:0 0;color:#3a3a3a;-webkit-text-stroke:0;">Aa</span>
<span class="t" style="left:326.80px;top:77px;font-size:14px;color:#444;-webkit-text-stroke:0;">A</span>
<span class="t" style="left:256.10px;top:114px;font-size:11.2px;letter-spacing:0.730px;color:#1c1c1c;">Font</span>
<span class="t" style="left:514.20px;top:51px;font-size:15px;color:#444;-webkit-text-stroke:0;">A</span>
<span class="t" style="left:519.30px;top:76px;font-size:10.5px;color:#1e8bd8;-webkit-text-stroke:0;">A</span>
<span class="t" style="left:457.80px;top:114px;font-size:11.2px;letter-spacing:0.049px;color:#1c1c1c;">Paragraph</span>
<span class="t" style="left:626.00px;top:41px;font-size:12px;letter-spacing:-0.005px;">Pointer Tool</span>
<span class="t" style="left:626.00px;top:67px;font-size:12px;letter-spacing:0.141px;">Connector</span>
<span class="t" style="left:607.30px;top:92px;font-size:21.5px;color:#444;-webkit-text-stroke:0;">A</span>
<span class="t" style="left:626.00px;top:93px;font-size:12px;letter-spacing:-0.236px;">Text</span>
<span class="t" style="left:656.20px;top:114px;font-size:11.2px;letter-spacing:0.315px;color:#1c1c1c;">Tools</span>
<span class="t" style="left:1196.10px;top:41px;font-size:12px;letter-spacing:-0.300px;transform:scaleX(0.9983);transform-origin:0 0;">Fill</span>
<span class="t" style="left:1196.10px;top:67px;font-size:12px;letter-spacing:-0.197px;">Line</span>
<span class="t" style="left:1196.10px;top:93px;font-size:12px;letter-spacing:-0.278px;">Effects</span>
<span class="t" style="left:962.70px;top:114px;font-size:11.2px;letter-spacing:-0.173px;color:#1c1c1c;">Shape Styles</span>
<span class="t" style="left:1273.80px;top:74px;font-size:12px;letter-spacing:0.353px;">Align</span>
<span class="t" style="left:1312.80px;top:74px;font-size:12px;letter-spacing:0.058px;">Position</span>
<span class="t" style="left:1385.00px;top:41px;font-size:12px;letter-spacing:0.046px;">Bring to Front</span>
<span class="t" style="left:1385.00px;top:67px;font-size:12px;letter-spacing:-0.282px;">Send to Back</span>
<span class="t" style="left:1385.00px;top:93px;font-size:12px;letter-spacing:-0.087px;">Group</span>
<span class="t" style="left:1353.50px;top:114px;font-size:11.2px;letter-spacing:0.292px;color:#1c1c1c;">Arrange</span>
<span class="t" style="left:-12.90px;top:147px;font-size:22px;transform:scaleX(0.9126);transform-origin:0 0;color:#185abd;-webkit-text-stroke:0;">Shapes</span>
<span class="t" style="left:-10.70px;top:190px;font-size:12px;letter-spacing:-0.300px;transform:scaleX(0.9968);transform-origin:0 0;">Search</span>
<span class="t" style="left:28.70px;top:190px;font-size:12px;letter-spacing:-0.300px;transform:scaleX(0.9812);transform-origin:0 0;">shapes</span>
<span class="t" style="left:-9.70px;top:237px;font-size:12px;letter-spacing:0.088px;">More</span>
<span class="t" style="left:20.40px;top:237px;font-size:12px;letter-spacing:-0.300px;transform:scaleX(0.9642);transform-origin:0 0;">Shapes</span>
<span class="t" style="left:-10.70px;top:261px;font-size:12px;letter-spacing:0.101px;">Quick</span>
<span class="t" style="left:23.50px;top:261px;font-size:12px;letter-spacing:-0.300px;transform:scaleX(0.9616);transform-origin:0 0;">Shapes</span>
<span class="t" style="left:-10.30px;top:285px;font-size:12px;letter-spacing:-0.300px;transform:scaleX(0.9248);transform-origin:0 0;font-weight:bold;-webkit-text-stroke:0;color:#262626;">Basic</span>
<span class="t" style="left:20.40px;top:285px;font-size:12px;letter-spacing:-0.300px;transform:scaleX(0.9688);transform-origin:0 0;font-weight:bold;-webkit-text-stroke:0;color:#262626;">Shapes</span>
<span class="t" style="left:-10.70px;top:309px;font-size:12px;letter-spacing:0.183px;">Arrow</span>
<span class="t" style="left:24.40px;top:309px;font-size:12px;letter-spacing:-0.300px;transform:scaleX(0.9616);transform-origin:0 0;">Shapes</span>
<span class="t" style="left:-10.70px;top:333px;font-size:12px;letter-spacing:-0.274px;">Decorative Shapes</span>
<span class="t" style="left:-10.70px;top:357px;font-size:12px;letter-spacing:-0.193px;">Graph and Math Shapes</span>
<span class="t" style="left:21.70px;top:403px;font-size:12px;letter-spacing:-0.205px;">Rectangle</span>
<span class="t" style="left:134.60px;top:403px;font-size:12px;letter-spacing:-0.300px;transform:scaleX(0.9892);transform-origin:0 0;">Square</span>
<span class="t" style="left:21.70px;top:440px;font-size:12px;letter-spacing:0.046px;">Circle</span>
<span class="t" style="left:134.60px;top:440px;font-size:12px;letter-spacing:-0.259px;">Ellipse</span>
<span class="t" style="left:21.70px;top:470px;font-size:12px;letter-spacing:0.098px;">Right</span>
<span class="t" style="left:21.70px;top:485px;font-size:12px;letter-spacing:-0.045px;">Triangle</span>
<span class="t" style="left:134.60px;top:478px;font-size:12px;letter-spacing:-0.030px;">Triangle</span>
<span class="t" style="left:21.70px;top:507px;font-size:12px;letter-spacing:-0.171px;">Rotated</span>
<span class="t" style="left:21.70px;top:522px;font-size:12px;letter-spacing:-0.045px;">Triangle</span>
<span class="t" style="left:134.60px;top:515px;font-size:12px;letter-spacing:-0.026px;">Pentagon</span>
<span class="t" style="left:21.70px;top:561px;font-size:12px;letter-spacing:0.011px;">Hexagon</span>
<span class="t" style="left:134.60px;top:561px;font-size:12px;letter-spacing:0.179px;">Heptagon</span>
</div>
</div></body></html>
